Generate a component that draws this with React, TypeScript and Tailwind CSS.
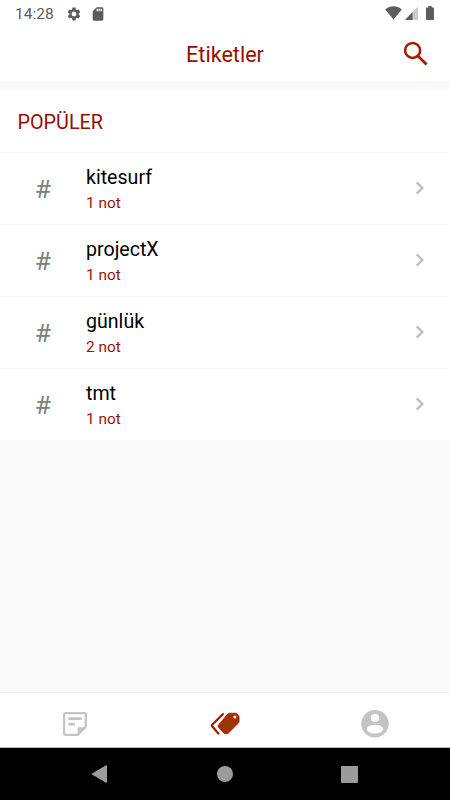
import { MdSdCard, MdSettings } from "react-icons/md";

type Tag = {
  name: string;
  count: number;
};

const tags: Tag[] = [
  { name: "kitesurf", count: 1 },
  { name: "projectX", count: 1 },
  { name: "günlük", count: 2 },
  { name: "tmt", count: 1 },
];

function StatusBar() {
  return (
    <div className="flex h-7 items-center justify-between pl-[15px] pr-4 text-[#5c5c5c]">
      <div className="flex items-center pb-px">
        <span className="w-[39px] text-[15.5px] leading-7 whitespace-nowrap">14:28</span>
        <MdSettings className="ml-3 size-4" />
        <MdSdCard className="ml-2 size-4" />
      </div>
      <div className="flex items-center pb-[2px]">
        <svg className="h-[14px] w-[17px]" viewBox="0 0 17 14" fill="currentColor">
          <path d="M8.5 13.6.2 3.4C5.2-.8 11.8-.8 16.8 3.4z" />
        </svg>
        <svg className="ml-[3px] h-[14px] w-[13px]" viewBox="0 0 13 14">
          <path d="M13 .5V14H0z" fill="#cacaca" />
          <path d="M7.5 6.2V14H0z" fill="currentColor" />
        </svg>
        <svg className="ml-2 h-[14px] w-2" viewBox="0 0 8 14" fill="currentColor">
          <path d="M2.3 0h3.4v1.4H7.3c.4 0 .7.3.7.7v11.2c0 .4-.3.7-.7.7H.7c-.4 0-.7-.3-.7-.7V2.1c0-.4.3-.7.7-.7h1.6z" />
        </svg>
      </div>
    </div>
  );
}

function Header() {
  return (
    <div className="grid h-[53px] grid-cols-[1fr_auto_1fr] items-center text-[#941000]">
      <span />
      <h1 className="text-[21.6px] leading-[53px]">Etiketler</h1>
      <button className="justify-self-end pr-[22px] pb-[3px]" aria-label="Ara">
        <svg className="h-[25px] w-[25px]" viewBox="0 0 25 25" fill="none" stroke="#a51c00">
          <circle cx="9.6" cy="9.4" r="7.5" strokeWidth="2.5" />
          <path d="M15 15l8.6 8.5" strokeWidth="2.8" />
        </svg>
      </button>
    </div>
  );
}

function TagRow({ tag }: { tag: Tag }) {
  return (
    <li className="flex h-[72px] items-center border-t border-[#f6f6f6] bg-white">
      <span className="w-[86px] pt-px text-center text-[26.5px] leading-8 text-[#808080]">#</span>
      <div className="flex-1 pt-[2px]">
        <p className="text-[19.6px] leading-[27px] text-black">{tag.name}</p>
        <p className="text-[15.4px] leading-[25px] text-[#9d1200]">{tag.count} not</p>
      </div>
      <svg className="mr-[25px] mb-px h-[14px] w-[10px]" viewBox="0 0 10 14" fill="none" stroke="#bfbfbf">
        <path d="M1.7 1.4 7.3 7l-5.6 5.6" strokeWidth="2.4" />
      </svg>
    </li>
  );
}

function TabBar() {
  return (
    <nav className="flex h-[56px] items-center border-t border-[#f3f3f3] border-b border-b-[#b5b5b5] bg-white pt-[8px]">
      <div className="flex flex-1 justify-center">
        <svg className="size-[26px]" viewBox="0 0 26 26" fill="none" stroke="#c4c4c4">
          <path
            d="M23.8 15.5V3.4c0-.8-.5-1.3-1.3-1.3H3.4c-.8 0-1.3.5-1.3 1.3v19.2c0 .8.5 1.3 1.3 1.3h12.1z"
            strokeWidth="2.3"
            strokeLinejoin="round"
          />
          <path d="M6.3 7.6h13.5M6.3 13.1h6.8" strokeWidth="2.6" />
          <path d="M15.6 16.2H25L15.6 25z" fill="#c4c4c4" stroke="none" />
        </svg>
      </div>
      <div className="flex flex-1 justify-center pr-px">
        <svg className="h-[24px] w-[30px]" viewBox="0 0 30 24">
          <path
            d="M12.9 2.1 2.2 12.7c-.5.5-.5 1 0 1.5l6.2 7.3"
            fill="none"
            stroke="#ab1808"
            strokeWidth="2.2"
            strokeLinecap="round"
          />
          <path
            d="M19.3 1.2h6.5c.5 0 .9.2 1.2.5l1.6 2c.3.4.5.8.5 1.3v4.6c0 .5-.2 1-.6 1.4L18.3 21.2c-.4.4-.9.6-1.4.6h-1.8c-.5 0-1-.2-1.3-.6l-5.3-6c-.6-.7-.6-1.6 0-2.3L17.9 1.8c.4-.4.9-.6 1.4-.6z"
            fill="#9c3500"
            stroke="#b30c08"
            strokeWidth=".7"
          />
          <circle cx="24.9" cy="5" r="1.5" fill="#fff" />
        </svg>
      </div>
      <div className="flex flex-1 justify-center">
        <svg className="size-7" viewBox="0 0 28 28">
          <circle cx="14" cy="13.7" r="13.7" fill="#c4c4c4" />
          <circle cx="14" cy="8" r="4.3" fill="#fff" />
          <ellipse cx="14" cy="19.1" rx="8.3" ry="4.3" fill="#fff" />
        </svg>
      </div>
    </nav>
  );
}

function SystemNav() {
  return (
    <div className="flex h-[52px] items-center justify-between bg-black pr-[92px] pl-[91px]">
      <svg className="h-[18px] w-4" viewBox="0 0 16 18">
        <path d="M.2 9 15 .3c.5-.2 1 0 1 .5v16.4c0 .5-.5.8-1 .5z" fill="#9b9b9b" />
      </svg>
      <span className="ml-px size-4 rounded-full bg-[#9b9b9b]" />
      <span className="size-[17px] rounded-[1px] bg-[#9b9b9b]" />
    </div>
  );
}

export default function App() {
  return (
    <div className="flex h-[800px] w-[450px] flex-col overflow-hidden bg-[#fafafa] font-['Roboto',sans-serif]">
      {/* HEADER */}
      <div className="h-[81px] bg-white">
        <StatusBar />
        <Header />
      </div>

      {/* POPULAR TAGS */}
      <main className="mt-[9px] flex-1">
        <h2 className="h-[62px] bg-white pl-[17.5px] text-[19.8px] leading-[65px] text-[#941000]">POPÜLER</h2>
        <ul>
          {tags.map((tag) => (
            <TagRow key={tag.name} tag={tag} />
          ))}
        </ul>
      </main>

      <TabBar />
      <SystemNav />
    </div>
  );
}
